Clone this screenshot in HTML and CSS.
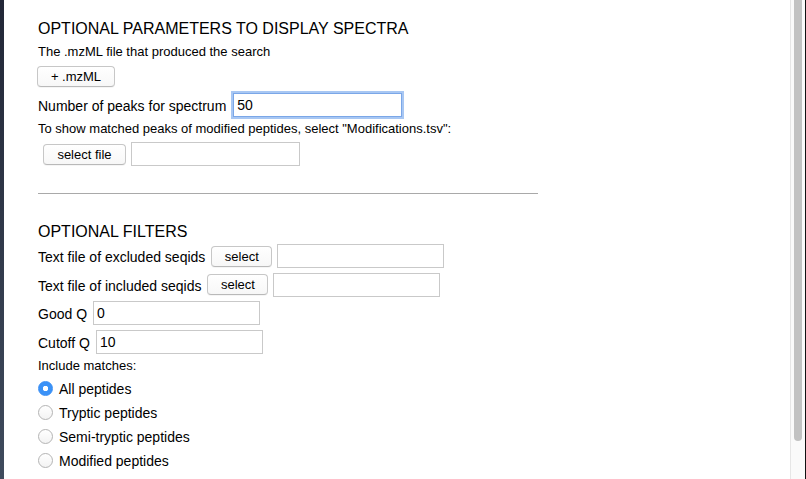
FILE: index.html
```html
<!DOCTYPE html>
<html lang="en">
<head>
<meta charset="utf-8">
<title>Optional parameters</title>
<link rel="stylesheet" href="styles.css">
</head>
<body>
<div class="window">
  <div class="edge"></div>
  <main class="page">
    <section class="group">
      <h2 class="title">OPTIONAL PARAMETERS TO DISPLAY SPECTRA</h2>
      <p class="note">The .mzML file that produced the search</p>
      <div class="row row-btn"><button class="btn btn-mzml">+ .mzML</button></div>
      <div class="row row-field">
        <label class="lbl">Number of peaks for spectrum</label>
        <input class="field field-focus" type="text" value="50">
      </div>
      <p class="note note-mods">To show matched peaks of modified peptides, select "Modifications.tsv":</p>
      <div class="row row-file">
        <button class="btn btn-file">select file</button>
        <input class="field field-file" type="text">
      </div>
    </section>
    <hr class="divider">
    <section class="group">
      <h2 class="title title-filters">OPTIONAL FILTERS</h2>
      <div class="row row-first">
        <label class="lbl">Text file of excluded seqids</label>
        <button class="btn btn-select">select</button>
        <input class="field" type="text">
      </div>
      <div class="row row-next">
        <label class="lbl">Text file of included seqids</label>
        <button class="btn btn-select">select</button>
        <input class="field" type="text">
      </div>
      <div class="row row-next">
        <label class="lbl">Good Q</label>
        <input class="field" type="text" value="0">
      </div>
      <div class="row row-next">
        <label class="lbl">Cutoff Q</label>
        <input class="field" type="text" value="10">
      </div>
      <p class="note note-include">Include matches:</p>
      <div class="radios">
        <label class="radio-row"><input class="radio" type="radio" name="match" checked><span class="radio-text">All peptides</span></label>
        <label class="radio-row"><input class="radio" type="radio" name="match"><span class="radio-text">Tryptic peptides</span></label>
        <label class="radio-row"><input class="radio" type="radio" name="match"><span class="radio-text">Semi-tryptic peptides</span></label>
        <label class="radio-row"><input class="radio" type="radio" name="match"><span class="radio-text">Modified peptides</span></label>
      </div>
    </section>
  </main>
  <div class="scrollbar"><div class="thumb"></div></div>
  <div class="frame"></div>
</div>
</body>
</html>
```
FILE: styles.css
```css
html, body {
  margin: 0;
  padding: 0;
  height: 479px;
  overflow: hidden;
  background: #ffffff;
}

.window {
  display: flex;
  height: 479px;
  font-family: "Liberation Sans", Arial, sans-serif;
  font-size: 14px;
  color: #000;
}

.edge {
  width: 4px;
  flex: 0 0 4px;
  background: linear-gradient(#222737, #3f4b5d);
}

.page {
  flex: 1 1 auto;
  padding-left: 34px;
  background: #fff;
}

.title {
  margin: 19px 0 0;
  font-size: 16px;
  line-height: 20px;
  font-weight: normal;
  color: #000;
}

.title-filters {
  margin-top: 27.5px;
}

.note {
  margin: 4.5px 0 0;
  font-size: 13px;
  line-height: 16px;
}

.row {
  display: flex;
  align-items: center;
  gap: 5px;
  height: 24px;
}

.row-btn {
  margin-top: 6.5px;
  height: 21px;
}

.row-field {
  margin-top: 6px;
}

.row-file {
  margin-top: 5.5px;
  padding-left: 5px;
}

.row-first {
  margin-top: 2.5px;
}

.row-next {
  margin-top: 4.5px;
}

.lbl {
  line-height: 16px;
  padding-top: 2px;
  margin-right: 1px;
}

.btn {
  font-family: "Liberation Sans", Arial, sans-serif;
  font-size: 13px;
  color: #000;
  height: 21px;
  padding: 0;
  border: 1px solid #c7c7c7;
  border-bottom-color: #b9b9b9;
  border-radius: 4px;
  background: linear-gradient(#ffffff, #f7f7f7);
  box-shadow: 0 1px 0 rgba(0, 0, 0, 0.04);
}

.btn-mzml {
  width: 78px;
  margin-left: -1px;
}

.btn-file {
  width: 83px;
}

.btn-select {
  width: 61px;
}

.field {
  box-sizing: border-box;
  width: 167px;
  height: 24px;
  margin: 0;
  padding: 0 3px;
  border: 1px solid #c9c9c9;
  border-radius: 0;
  font-family: "Liberation Sans", Arial, sans-serif;
  font-size: 14px;
  color: #000;
  background: #fff;
  outline: none;
}

.field-file {
  width: 169px;
}

.field-focus {
  width: 169px;
  margin-left: 1px;
  border-color: #7ba7e8;
  box-shadow: 0 0 0 2px #a8c7f3;
}

.note-mods {
  margin-top: 3.5px;
}

.divider {
  margin: 27px 0 0;
  width: 500px;
  height: 0;
  border: 0;
  border-top: 1px solid #a9a9a9;
}

.note-include {
  margin-top: 4px;
}

.radios {
  margin-top: 2.5px;
  display: flex;
  flex-direction: column;
}

.radio-row {
  display: flex;
  align-items: center;
  height: 24px;
  gap: 6px;
}

.radio {
  appearance: none;
  -webkit-appearance: none;
  box-sizing: border-box;
  width: 15px;
  height: 15px;
  margin: 0;
  border-radius: 50%;
  border: 1px solid #b4b4b4;
  background: linear-gradient(#ffffff, #f3f3f3);
}

.radio:checked {
  border-color: #3a8ff5;
  background: radial-gradient(circle, #ffffff 0 2.4px, #3b92f7 3px);
}

.radio-text {
  line-height: 16px;
  padding-top: 2px;
}

.scrollbar {
  flex: 0 0 15px;
  width: 15px;
  box-sizing: border-box;
  background: #fafafa;
  border-left: 1px solid #e6e6e6;
  padding-left: 3px;
}

.thumb {
  width: 8px;
  height: 441px;
  margin-top: -6px;
  padding-top: 6px;
  box-sizing: content-box;
  background: #c2c2c2;
  border-radius: 4px;
}

.frame {
  flex: 0 0 1px;
  width: 1px;
  background: #111;
}
```
